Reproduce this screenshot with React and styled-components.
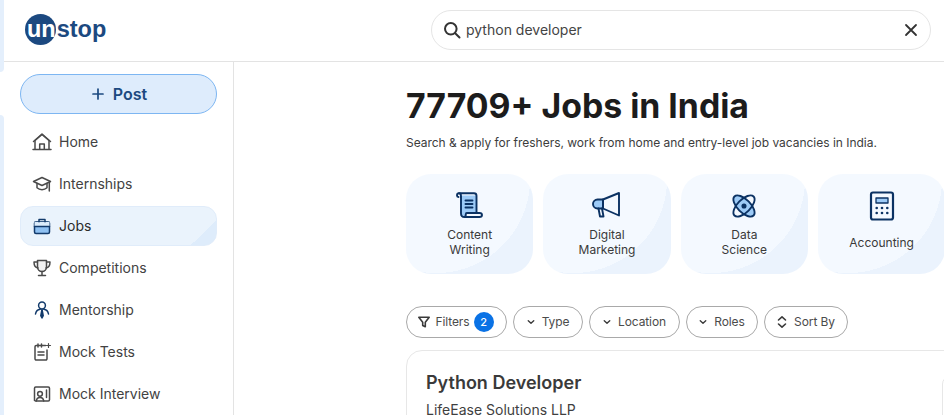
import React from "react";
import styled, { createGlobalStyle } from "styled-components";

const Global = createGlobalStyle`
  html, body { margin: 0; padding: 0; background: #fff; }
  body { font-family: Inter, "Liberation Sans", sans-serif; color: #333; }
  * { box-sizing: border-box; }
`;

const Page = styled.div`
  display: flex;
  width: 944px;
  height: 415px;
  overflow: hidden;
  background: #fff;
`;
const Rail = styled.div`
  flex: none;
  width: 4px;
  display: flex;
  flex-direction: column;
  gap: 43px;
`;
const RailBlock = styled.div`
  flex: ${(p) => (p.$grow ? 1 : "none")};
  height: ${(p) => (p.$grow ? "auto" : "72px")};
  background: #e4effc;
  border-radius: ${(p) => (p.$grow ? "0 4px 0 0" : "0 0 4px 0")};
`;
const Shell = styled.div`
  flex: 1;
  min-width: 0;
  display: flex;
  flex-direction: column;
`;
const Header = styled.header`
  flex: none;
  height: 62px;
  display: flex;
  align-items: flex-start;
  justify-content: space-between;
  border-bottom: 1px solid #e3e3e3;
  padding: 10px 13px 0 21px;
`;
const Logo = styled.div`
  position: relative;
  margin-top: 4px;
  width: 82px;
  height: 31px;
  font-family: "Liberation Sans", Arial, sans-serif;
  font-weight: 700;
  font-size: 23.5px;
  line-height: 31px;
  color: #1c4980;
  white-space: nowrap;
  &::before {
    content: "";
    position: absolute;
    left: 0;
    top: 0;
    width: 31px;
    height: 31px;
    border-radius: 50%;
    background: #1c4980;
  }
`;
const LogoText = styled.span`
  position: relative;
  color: ${(p) => (p.$light ? "#fff" : "#1c4980")};
  padding-left: ${(p) => (p.$light ? "2px" : "1px")};
`;
const Search = styled.div`
  width: 500px;
  height: 40px;
  border: 1px solid #e5e5e5;
  border-radius: 20px;
  display: flex;
  align-items: center;
  padding: 0 11px 0 10px;
  color: #444;
  font-size: 14px;
`;
const SearchText = styled.span`
  flex: 1;
  margin: 0 0 2px 4px;
`;
const Body = styled.div`
  flex: 1;
  min-height: 0;
  display: flex;
`;
const Sidebar = styled.aside`
  flex: none;
  width: 230px;
  border-right: 1px solid #e3e3e3;
  padding: 12px 16px 0 16px;
  display: flex;
  flex-direction: column;
  gap: 2px;
`;
const PostButton = styled.button`
  flex: none;
  width: 197px;
  height: 40px;
  margin-bottom: 6px;
  border: 1px solid #7db6f2;
  border-radius: 20px;
  background: #deecfc;
  color: #1c4980;
  font: 600 16px Inter, "Liberation Sans", sans-serif;
  display: flex;
  align-items: center;
  justify-content: center;
  gap: 7px;
  padding: 0;
`;
const NavItem = styled.div`
  flex: none;
  width: 197px;
  height: 40px;
  display: flex;
  align-items: center;
  gap: 7px;
  padding-left: 11px;
  font-size: 14px;
  color: ${(p) => (p.$active ? "#2b2b2b" : "#424242")};
  border-radius: 13px;
  border: ${(p) => (p.$active ? "1px solid #e0ecfa" : "1px solid transparent")};
  background: ${(p) =>
    p.$active
      ? "radial-gradient(circle 176px at 60px -100px, #eaf3fc 100%, #deecfb 100%)"
      : "transparent"};
`;
const NavLabel = styled.span`
  margin-bottom: 2px;
`;
const NavIcon = styled.svg`
  flex: none;
  width: 20px;
  height: 20px;
  fill: none;
  stroke: ${(p) => p.$stroke || "#4a4a4a"};
  stroke-width: 1.5;
  stroke-linecap: round;
  stroke-linejoin: round;
`;
const Main = styled.main`
  flex: 1;
  min-width: 0;
  padding: 23px 0 0 172px;
`;
const Title = styled.h1`
  margin: 0;
  font-size: 33.8px;
  line-height: 41px;
  font-weight: 700;
  color: #1c1c1c;
  white-space: nowrap;
`;
const Subtitle = styled.p`
  margin: 8px 0 0;
  font-size: 12px;
  line-height: 18px;
  color: #3c3c3c;
  white-space: nowrap;
  letter-spacing: -0.02px;
`;
const Categories = styled.div`
  display: flex;
  gap: 10px;
  margin-top: 22px;
`;
const Category = styled.div`
  flex: none;
  width: 127.33px;
  height: 100px;
  padding-top: 16px;
  border-radius: 25px;
  background: radial-gradient(circle 94px at 30px 5px, #f4f9ff 100%, #ebf3fd 100%);
  display: flex;
  flex-direction: column;
  align-items: center;
  gap: 5px;
  font-size: 12px;
  line-height: 15px;
  text-align: center;
  color: #3a3a3a;
`;
const CategoryLabel = styled.div`
  height: 30px;
  display: flex;
  flex-direction: column;
  justify-content: center;
`;
const CategoryIcon = styled.svg`
  flex: none;
  width: 32px;
  height: 32px;
  fill: none;
  stroke: #0b3263;
  stroke-width: 1.9;
  stroke-linecap: round;
  stroke-linejoin: round;
`;
const Filters = styled.div`
  display: flex;
  gap: 6px;
  margin-top: 32px;
`;
const Pill = styled.div`
  flex: none;
  height: 32px;
  width: ${(p) => p.$w}px;
  padding-right: 2px;
  border: 1px solid #a9a9a9;
  border-radius: 16px;
  display: flex;
  align-items: center;
  justify-content: center;
  gap: ${(p) => p.$gap || 5}px;
  font-size: 12px;
  letter-spacing: -0.1px;
  color: #4b4b4b;
`;
const PillLabel = styled.span`
  margin-bottom: 2px;
`;
const Badge = styled.span`
  width: 20px;
  height: 20px;
  border-radius: 50%;
  background: #0a72e5;
  color: #fff;
  font-size: 11px;
  font-weight: 500;
  display: flex;
  align-items: center;
  justify-content: center;
`;
const PillIcon = styled.svg`
  flex: none;
  width: ${(p) => p.$s || 14}px;
  height: ${(p) => p.$s || 14}px;
  fill: none;
  stroke: #3a3a3a;
  stroke-width: 1.6;
  stroke-linecap: round;
  stroke-linejoin: round;
`;
const JobCard = styled.article`
  width: 616px;
  height: 120px;
  margin-top: 12px;
  border: 1px solid #e7e7e7;
  border-radius: 16px;
  padding: 21px 19px;
  display: flex;
  justify-content: space-between;
  align-items: flex-start;
`;
const JobTitle = styled.h2`
  margin: 0;
  font-size: 18px;
  line-height: 22px;
  font-weight: 600;
  color: #3a3a3a;
`;
const Company = styled.p`
  margin: 7px 0 0;
  font-size: 14px;
  line-height: 18px;
  color: #3f3f3f;
`;
const CompanyLogo = styled.div`
  flex: none;
  width: 60px;
  height: 60px;
  margin-top: 4px;
  border: 1px solid #e7e7e7;
  border-radius: 8px;
`;

const nav = [
  ["Home", <><path d="M1 17.500h18" /><path d="M3 17V8.500L10 2.500l7 6V17" /><path d="M1.500 9.500 10 2l8.500 7.500" /><path d="M7.700 17v-5h4.600v5" /></>],
  ["Internships", <><path d="M1.500 7.500 10 3.500l8.500 4-8.500 4z" /><path d="M5 9.500v4.300c1.400 1.300 3 1.900 5 1.900s3.600-.6 5-1.900V9.500" /><path d="M17.300 8.500v8.600" /></>],
  ["Jobs", null, true],
  ["Competitions", <><path d="M5.500 2.500h9V9a4.500 4.500 0 0 1-9 0z" fill="#f1f1f1" /><path d="M5.500 4H2c0 3.500 1.300 5.500 4 6M14.500 4H18c0 3.500-1.300 5.500-4 6M10 13.500v3M6.500 17.500h7" /></>],
  ["Mentorship", <g stroke="#123a6b"><circle cx="10" cy="5.500" r="3.400" /><path d="M3.500 14c.5-3 2.600-4.600 4.700-4.800M16.500 14c-.5-3-2.600-4.600-4.700-4.800" /><path d="M10 9.500l-1.200 6.200L10 18l1.200-2.300z" fill="#123a6b" /></g>],
  ["Mock Tests", <><path d="M13.500 3.500H4.200A1.200 1.200 0 0 0 3 4.700v12.100A1.200 1.200 0 0 0 4.200 18h9.600a1.200 1.200 0 0 0 1.200-1.200V8" /><path d="M6 2v3M9.500 2v3M6 10h6M6 13h6" /><path d="M16.500 1.500v4M14.500 3.500h4" strokeWidth="1.200" /></>],
  ["Mock Interview", <><path d="M2.500 16.500V4.200A1.200 1.200 0 0 1 3.700 3h12.600a1.200 1.200 0 0 1 1.200 1.200v11.600a1.200 1.200 0 0 1-1.200 1.200H3.500" /><circle cx="8" cy="9.800" r="2.400" /><path d="M4.300 17c.2-2.300 1.700-3.600 3.700-3.600s3.500 1.300 3.700 3.600M14.500 6v7.500" /></>],
];

const JobsIcon = () => (
  <NavIcon viewBox="0 0 20 20" $stroke="#123a6b">
    <rect x="2.500" y="5.800" width="15" height="11.700" rx="1.500" fill="#8fc1f2" />
    <path d="M2.500 5.800h15v4.700h-15z" fill="#dcecfb" stroke="none" />
    <path d="M7 5.800V3.500h6v2.300M2.500 10.500h15M8.700 10.500h2.600" />
  </NavIcon>
);

const categories = [
  [["Content", "Writing"], <><path d="M7 7V6c0-1.800-.8-2.800-2-2.800S3 4.200 3 5.500c0 1 .6 1.500 1.500 1.500" /><path d="M7 5.500h15.500v17.500H11v3H10C8.300 26 7 25 7 23.500z" fill="#9dcbf7" stroke="none" /><path d="M7 6v17.500C7 25.500 8.300 27 10.500 27H25.500c1.500 0 2.500-.9 2.500-2s-1-2-2.500-2H12.800c-.6 0-1 .5-1 1.200 0 1.400-.7 2.800-1.800 2.800" /><path d="M5 3.200h15c1.500 0 2.500 1 2.500 2.500V23" /><path d="M11.500 10.500h7M11.500 14h7M11.500 17.500h7" /></>],
  [["Digital", "Marketing"], <><path d="M12 9.500H6.500a4.500 4.500 0 0 0 0 9H12z" fill="#9dcbf7" /><path d="M12 9.500 28 3v22.500l-16-7z" /><path d="M7.500 18.500l1.500 8h3.500l-1.500-8" /></>],
  [["Data", "Science"], <><ellipse cx="16" cy="16" rx="13.500" ry="6.500" transform="rotate(45 16 16)" fill="#9dcbf7" /><ellipse cx="16" cy="16" rx="13.500" ry="6.500" transform="rotate(-45 16 16)" /><circle cx="16" cy="16" r="1.600" fill="#0b3263" /></>],
  [["Accounting"], <><rect x="5" y="2.500" width="22" height="27" rx="2" strokeWidth="2.200" /><rect x="10" y="8" width="12" height="5" fill="#9dcbf7" strokeWidth="1.300" /><g fill="#0b3263" stroke="none">{[18, 23].flatMap((y) => [10.700, 16, 21.300].map((x) => <circle key={`${x}-${y}`} cx={x} cy={y} r="1.300" />))}</g></>],
];

const Chevron = () => (
  <PillIcon viewBox="0 0 14 14" $s={12}>
    <path d="M3.800 5.600 7 8.600l3.200-3" />
  </PillIcon>
);

export default function App() {
  return (
    <Page>
      <Global />
      <Rail>
        <RailBlock />
        <RailBlock $grow />
      </Rail>
      <Shell>
        <Header>
          <Logo>
            <LogoText $light>un</LogoText>
            <LogoText>stop</LogoText>
          </Logo>
          <Search>
            <svg width="20" height="20" viewBox="0 0 20 20" fill="none" stroke="#333" strokeWidth="2" strokeLinecap="round">
              <circle cx="8.800" cy="8.800" r="5.800" />
              <path d="m13.200 13.200 4.300 4.300" />
            </svg>
            <SearchText>python developer</SearchText>
            <svg width="16" height="16" viewBox="0 0 16 16" fill="none" stroke="#333" strokeWidth="1.800" strokeLinecap="round">
              <path d="m3 3 10 10M13 3 3 13" />
            </svg>
          </Search>
        </Header>
        <Body>
          <Sidebar>
            <PostButton>
              <svg width="16" height="16" viewBox="0 0 16 16" fill="none" stroke="#1c4980" strokeWidth="1.700" strokeLinecap="round">
                <path d="M8 3v10M3 8h10" />
              </svg>
              Post
            </PostButton>
            {nav.map(([label, icon, isJobs]) => (
              <NavItem key={label} $active={isJobs}>
                {isJobs ? <JobsIcon /> : <NavIcon viewBox="0 0 20 20">{icon}</NavIcon>}
                <NavLabel>{label}</NavLabel>
              </NavItem>
            ))}
          </Sidebar>
          <Main>
            <Title>77709+ Jobs in India</Title>
            <Subtitle>Search &amp; apply for freshers, work from home and entry-level job vacancies in India.</Subtitle>
            <Categories>
              {categories.map(([lines, icon]) => (
                <Category key={lines[0]}>
                  <CategoryIcon viewBox="0 0 32 32">{icon}</CategoryIcon>
                  <CategoryLabel>
                    {lines.map((l) => (
                      <div key={l}>{l}</div>
                    ))}
                  </CategoryLabel>
                </Category>
              ))}
            </Categories>
            <Filters>
              <Pill $w={101} $gap={4}>
                <PillIcon viewBox="0 0 14 14">
                  <path d="M1.800 2.300h10.400L8.300 7.200v4.600L5.700 10.500V7.200z" />
                </PillIcon>
                <PillLabel>Filters</PillLabel>
                <Badge>2</Badge>
              </Pill>
              <Pill $w={70}><Chevron /><PillLabel>Type</PillLabel></Pill>
              <Pill $w={91}><Chevron /><PillLabel>Location</PillLabel></Pill>
              <Pill $w={72}><Chevron /><PillLabel>Roles</PillLabel></Pill>
              <Pill $w={84}>
                <PillIcon viewBox="0 0 14 14">
                  <path d="M3.500 5 7 1.800 10.500 5M3.500 9 7 12.200 10.500 9" />
                </PillIcon>
                <PillLabel>Sort By</PillLabel>
              </Pill>
            </Filters>
            <JobCard>
              <div>
                <JobTitle>Python Developer</JobTitle>
                <Company>LifeEase Solutions LLP</Company>
              </div>
              <CompanyLogo />
            </JobCard>
          </Main>
        </Body>
      </Shell>
    </Page>
  );
}
